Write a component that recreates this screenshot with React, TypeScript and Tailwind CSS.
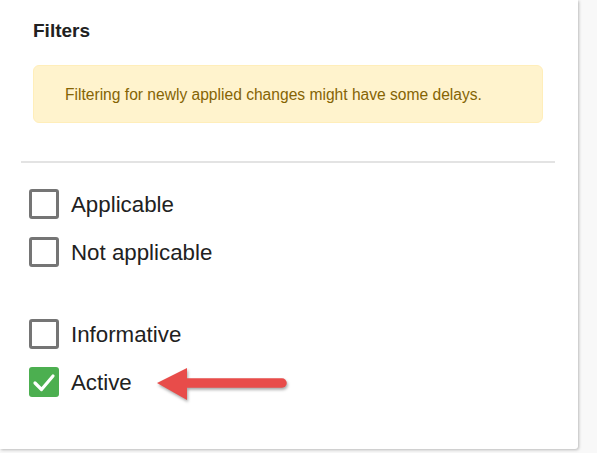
import React from "react";

type Item = { label: string; checked?: boolean };

function CheckBox({ checked }: { checked?: boolean }) {
  if (checked) {
    return (
      <span className="flex h-[30px] w-[30px] shrink-0 items-center justify-center rounded-[3px] bg-[#4caf50]">
        <svg width="30" height="30" viewBox="0 0 30 30">
          <path d="M6 16 L12.5 22.5 L24 9" fill="none" stroke="#fff" strokeWidth="3.2" strokeLinecap="round" strokeLinejoin="round" />
        </svg>
      </span>
    );
  }
  return <span className="block h-[30px] w-[30px] shrink-0 rounded-[3px] border-[3px] border-[#757575] bg-white" />;
}

function Row({ item }: { item: Item }) {
  return (
    <label className="flex h-[48px] items-center gap-[12px]">
      <CheckBox checked={item.checked} />
      <span className="pt-[3px] text-[22.3px] leading-none text-[#212121]">{item.label}</span>
    </label>
  );
}

function Arrow() {
  return (
    <svg className="absolute left-[150px] top-[360px] drop-shadow-[1px_2px_1.5px_rgba(0,0,0,0.35)]" width="150" height="45" viewBox="0 0 150 45">
      <line x1="34" y1="23" x2="132" y2="23" stroke="#e84c4a" strokeWidth="9.5" strokeLinecap="round" />
      <polygon points="7,23 37,8 37,40" fill="#e84c4a" />
    </svg>
  );
}

export default function App() {
  const groupA: Item[] = [{ label: "Applicable" }, { label: "Not applicable" }];
  const groupB: Item[] = [{ label: "Informative" }, { label: "Active", checked: true }];

  return (
    <div className="h-screen w-full bg-[#f8f8f8] font-['Liberation_Sans',Arial,sans-serif]">
      <div className="relative h-[449px] w-[578px] rounded-br-[3px] bg-white shadow-[1px_1px_3px_rgba(0,0,0,0.25)]">
        <div className="px-[33px] pt-[20px]">
          <h2 className="text-[19px] font-bold leading-[22px] text-[#212121]">Filters</h2>
          <div className="mt-[23px] flex h-[58px] w-[510px] items-center rounded-[6px] border border-[#ffeeba] bg-[#fff3cd] px-[31px] pt-[1px] text-[15.6px] text-[#856404]">
            Filtering for newly applied changes might have some delays.
          </div>
        </div>
        <div className="ml-[21px] mt-[38px] h-[2px] w-[534px] bg-[#e3e3e3]" />
        <div className="mt-[17px] flex flex-col pl-[29px]">
          {groupA.map((it) => (
            <Row key={it.label} item={it} />
          ))}
          <div className="h-[34px]" />
          {groupB.map((it) => (
            <Row key={it.label} item={it} />
          ))}
        </div>
        <Arrow />
      </div>
    </div>
  );
}
